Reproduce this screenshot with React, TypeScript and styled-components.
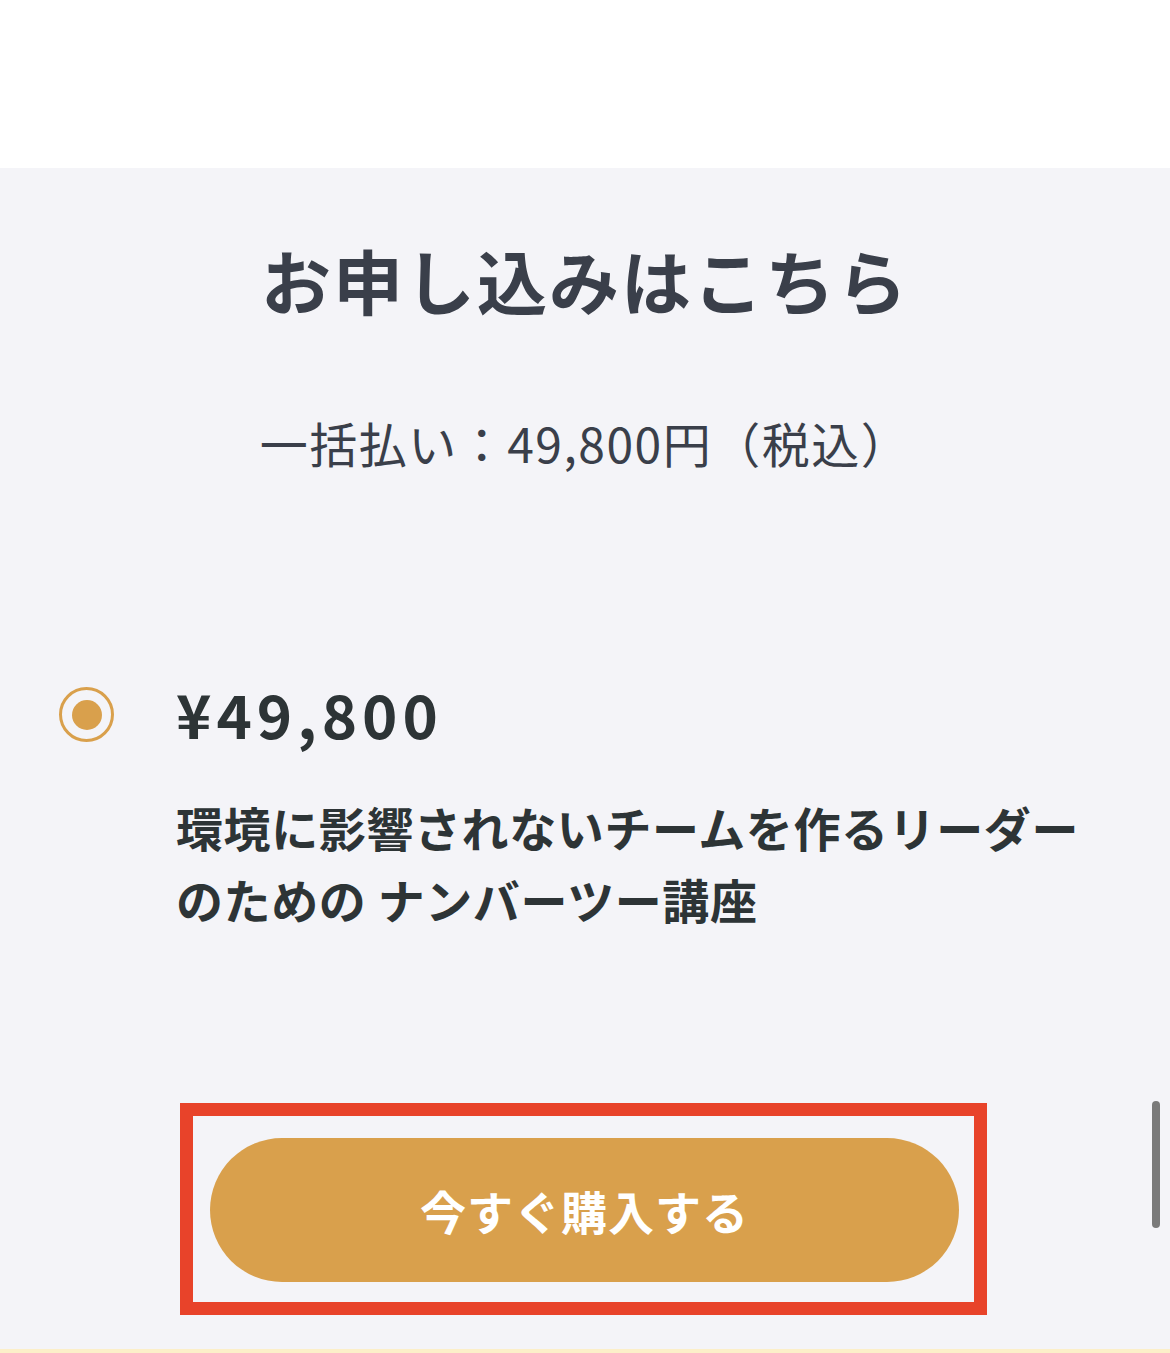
import React, { useState } from 'react'
import styled, { createGlobalStyle } from 'styled-components'

const GlobalStyle = createGlobalStyle`
  html, body {
    margin: 0;
    padding: 0;
    background: #ffffff;
    font-family: "Noto Sans CJK JP", "Noto Sans", sans-serif;
  }
`

const Page = styled.div`
  width: 1170px;
  height: 1353px;
  overflow: hidden;
  display: flex;
  flex-direction: column;
  position: relative;
`
const TopSpace = styled.div`
  height: 168px;
  background: #ffffff;
  flex-shrink: 0;
`
const Section = styled.section`
  flex: 1;
  background: #f4f4f8;
  display: flex;
  flex-direction: column;
  padding-top: 68px;
`
const Heading = styled.div`
  display: flex;
  flex-direction: column;
  align-items: center;
`
const Lead = styled.h2`
  margin: 0;
  font-size: 70px;
  line-height: 88px;
  font-weight: 700;
  color: #3a3f4a;
  letter-spacing: 2px;
`
const PriceNote = styled.p`
  margin: 88px 0 0;
  font-size: 48px;
  line-height: 60px;
  font-weight: 400;
  color: #3a3f4a;
  letter-spacing: 1.5px;
`
const Option = styled.label`
  display: flex;
  align-items: flex-start;
  gap: 62px;
  margin: 208px 0 0 59px;
  padding-right: 60px;
  cursor: pointer;
`
const Radio = styled.span<{ $checked: boolean }>`
  flex-shrink: 0;
  width: 55px;
  height: 55px;
  margin-top: 7px;
  border-radius: 50%;
  border: 3px solid #d9a04c;
  box-sizing: border-box;
  display: flex;
  align-items: center;
  justify-content: center;

  &::after {
    content: '';
    width: 30px;
    height: 30px;
    border-radius: 50%;
    background: ${(p) => (p.$checked ? '#d9a04c' : 'transparent')};
  }
`
const OptionBody = styled.div`
  display: flex;
  flex-direction: column;
`
const Amount = styled.div`
  font-size: 60px;
  line-height: 66px;
  font-weight: 700;
  color: #2d3436;
  letter-spacing: 5px;
`
const ProductName = styled.div`
  margin-top: 45px;
  font-size: 47px;
  line-height: 72px;
  font-weight: 700;
  color: #2d3436;
  letter-spacing: 0.6px;
  white-space: nowrap;
`
const Highlight = styled.div`
  align-self: flex-start;
  margin: 168px 0 0 180px;
  width: 807px;
  box-sizing: border-box;
  border: 13px solid #e8432a;
  padding: 22px 15px 20px 17px;
`
const BuyButton = styled.button`
  display: block;
  width: 100%;
  height: 144px;
  border: none;
  border-radius: 72px;
  background: #d9a04c;
  color: #ffffff;
  font-family: inherit;
  font-size: 46px;
  font-weight: 700;
  letter-spacing: 1px;
  cursor: pointer;
`
const BottomStrip = styled.div`
  height: 4px;
  background: #fcefc9;
  flex-shrink: 0;
`
const ScrollThumb = styled.div`
  position: absolute;
  right: 10px;
  top: 1101px;
  width: 8px;
  height: 127px;
  border-radius: 4px;
  background: #7a7a7a;
`

const App: React.FC = () => {
  const [checked, setChecked] = useState(true)

  return (
    <>
      <GlobalStyle />
      <Page>
        <TopSpace />
        <Section>
          <Heading>
            <Lead>お申し込みはこちら</Lead>
            <PriceNote>一括払い：49,800円（税込）</PriceNote>
          </Heading>
          <Option onClick={() => setChecked(true)}>
            <Radio $checked={checked} />
            <OptionBody>
              <Amount>¥49,800</Amount>
              <ProductName>
                環境に影響されないチームを作るリーダー
                <br />
                のための ナンバーツー講座
              </ProductName>
            </OptionBody>
          </Option>
          <Highlight>
            <BuyButton>今すぐ購入する</BuyButton>
          </Highlight>
        </Section>
        <BottomStrip />
        <ScrollThumb />
      </Page>
    </>
  )
}

export default App
